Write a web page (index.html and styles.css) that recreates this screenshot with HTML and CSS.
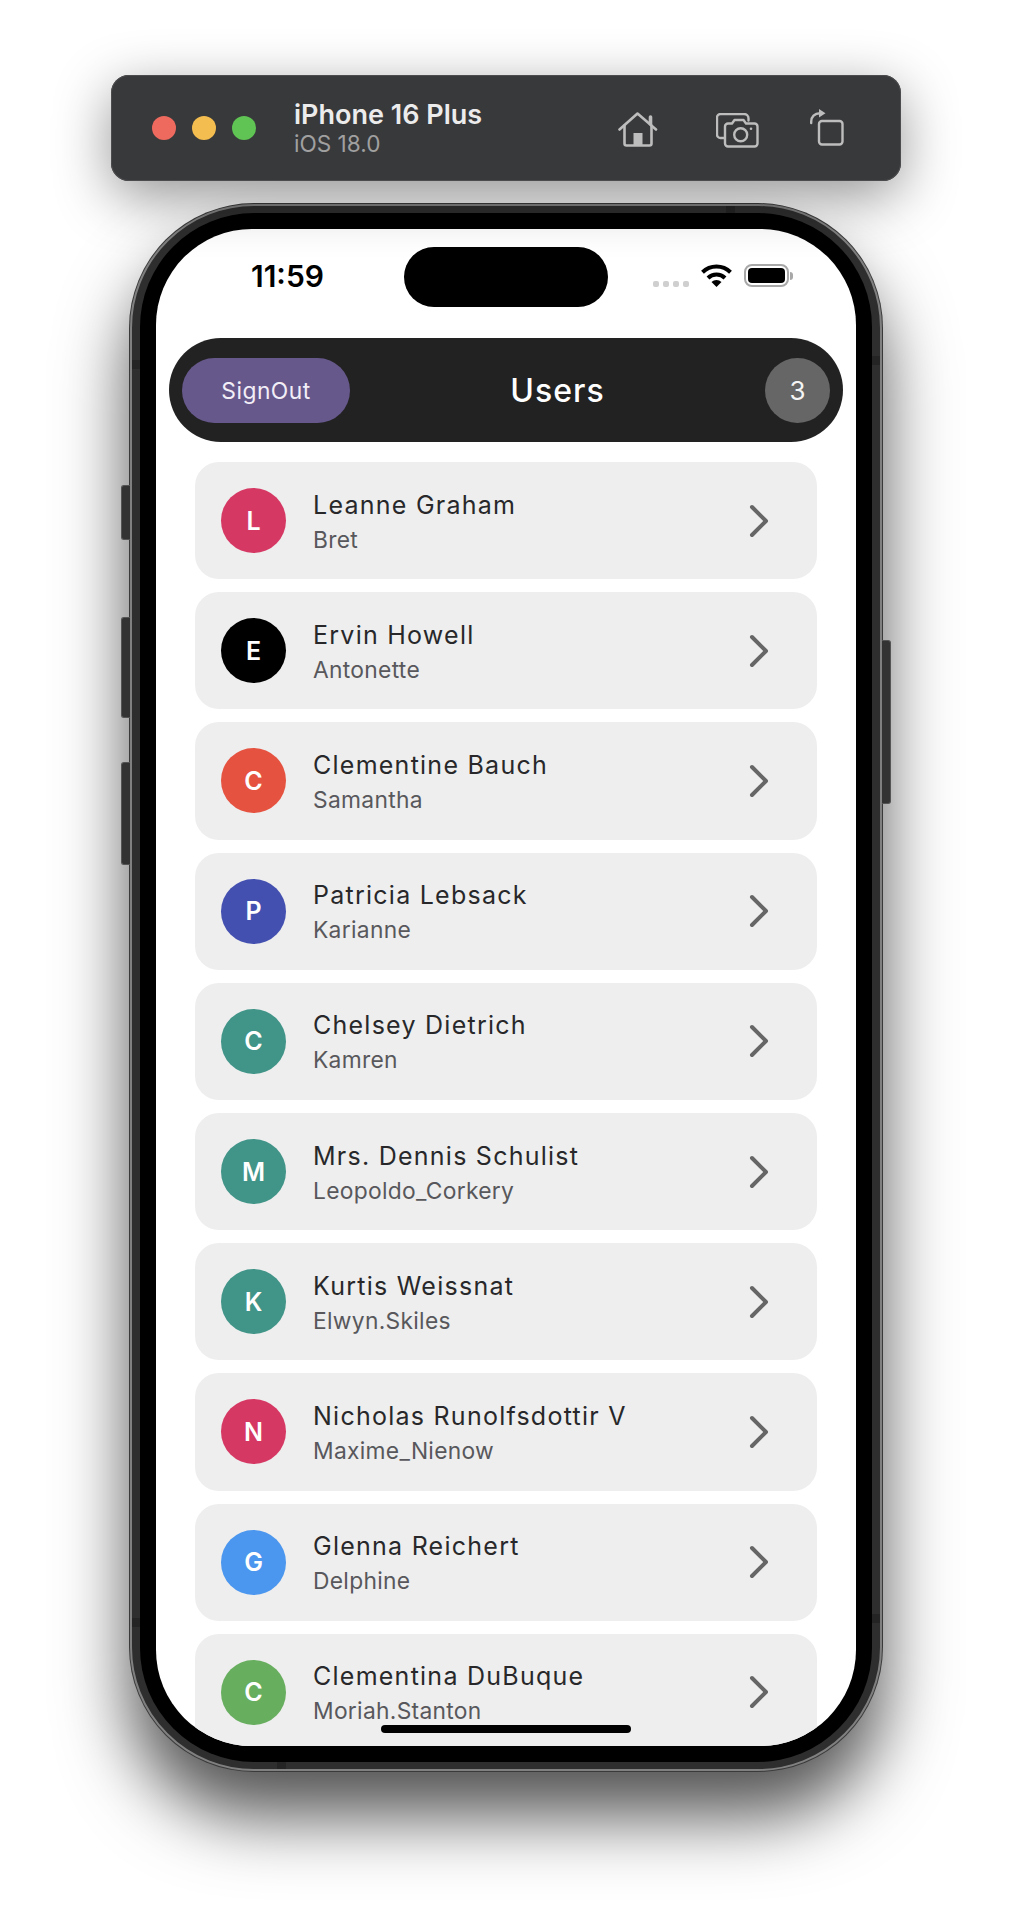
FILE: index.html
```html
<!DOCTYPE html>
<html lang="en">
<head>
<meta charset="utf-8">
<title>Users</title>
<link rel="stylesheet" href="styles.css">
</head>
<body>
<div class="stage">
  <header class="toolbar">
    <div class="traffic">
      <span class="light light-red"></span>
      <span class="light light-yellow"></span>
      <span class="light light-green"></span>
    </div>
    <div class="device">
      <div class="device-name">iPhone 16 Plus</div>
      <div class="device-os">iOS 18.0</div>
    </div>
    <div class="tools">
      <svg class="tool tool-home" viewBox="0 0 40 36" fill="none" stroke="#bdbdbd" stroke-width="2.6" stroke-linecap="round" stroke-linejoin="round">
        <path d="M1.5 17.5 19.5 1.5 38 17.5"/>
        <path d="M6.5 13.5V31.5a2 2 0 0 0 2 2H31.5a2 2 0 0 0 2-2V13.5"/>
        <path d="M32.5 5v7" stroke-width="3.6"/>
        <rect x="15.5" y="21" width="9" height="13" fill="#bdbdbd" stroke="none"/>
      </svg>
      <svg class="tool tool-camera" viewBox="0 0 43 35" fill="none" stroke="#bdbdbd" stroke-width="2.4" stroke-linecap="round" stroke-linejoin="round">
        <path d="M7.5 25H4.5a3.5 3.5 0 0 1-3.5-3.5V4.5A3.5 3.5 0 0 1 4.500 1H28a4.500 4.500 0 0 1 4.500 4.500V7.500"/>
        <path d="M12 10.500H16L18.500 7H27.500L30 10.500H38.500a3 3 0 0 1 3 3V30.500a3 3 0 0 1-3 3H12a3 3 0 0 1-3-3V13.500a3 3 0 0 1 3-3Z"/>
        <circle cx="24.700" cy="21.700" r="6.500"/>
        <circle cx="35" cy="15.700" r="1.300" fill="#bdbdbd" stroke="none"/>
      </svg>
      <svg class="tool tool-rotate" viewBox="0 0 34 39" fill="none" stroke="#bdbdbd" stroke-width="2.400" stroke-linecap="round" stroke-linejoin="round">
        <rect x="9" y="12" width="23.500" height="23.500" rx="3"/>
        <path d="M1.200 14V12.500C1.200 8 4.500 4.200 10 4.200"/>
        <path d="M9 0 15.500 4.200 9 8.500Z" fill="#bdbdbd" stroke="none"/>
      </svg>
    </div>
  </header>

  <div class="phone">
    <span class="key key-mute"></span>
    <span class="key key-up"></span>
    <span class="key key-down"></span>
    <span class="key key-power"></span>
    <span class="band band-top"></span>
    <span class="band band-bottom"></span>
    <span class="band band-lt"></span>
    <span class="band band-lb"></span>
    <span class="band band-rt"></span>
    <span class="band band-rb"></span>
    <div class="bezel">
      <main class="screen">
        <div class="status">
          <div class="time">11:59</div>
          <div class="island"></div>
          <div class="indicators">
            <div class="signal"><i></i><i></i><i></i><i></i></div>
            <svg class="wifi" viewBox="0 0 31 23" fill="none" stroke="#000">
              <path d="M1.500 8.300a20 20 0 0 1 28 0" stroke-width="4"/>
              <path d="M7 14a12 12 0 0 1 17 0" stroke-width="4"/>
              <path d="M15.500 23 10.500 18a7.200 7.200 0 0 1 10 0Z" fill="#000" stroke="none"/>
            </svg>
            <div class="battery"><div class="battery-body"><div class="battery-fill"></div></div><div class="battery-nub"></div></div>
          </div>
        </div>

        <div class="appbar">
          <button class="signout">SignOut</button>
          <h1 class="title">Users</h1>
          <div class="count">3</div>
        </div>

        <div class="list">
          <div class="card">
            <div class="avatar av-pink">L</div>
            <div class="info"><div class="name">Leanne Graham</div><div class="handle">Bret</div></div>
            <svg class="chev" viewBox="0 0 20 34" fill="none" stroke="#666" stroke-width="4" stroke-linecap="round" stroke-linejoin="round"><path d="M3 3 17 17 3 31"/></svg>
          </div>
          <div class="card">
            <div class="avatar av-black">E</div>
            <div class="info"><div class="name">Ervin Howell</div><div class="handle">Antonette</div></div>
            <svg class="chev" viewBox="0 0 20 34" fill="none" stroke="#666" stroke-width="4" stroke-linecap="round" stroke-linejoin="round"><path d="M3 3 17 17 3 31"/></svg>
          </div>
          <div class="card">
            <div class="avatar av-red">C</div>
            <div class="info"><div class="name">Clementine Bauch</div><div class="handle">Samantha</div></div>
            <svg class="chev" viewBox="0 0 20 34" fill="none" stroke="#666" stroke-width="4" stroke-linecap="round" stroke-linejoin="round"><path d="M3 3 17 17 3 31"/></svg>
          </div>
          <div class="card">
            <div class="avatar av-indigo">P</div>
            <div class="info"><div class="name">Patricia Lebsack</div><div class="handle">Karianne</div></div>
            <svg class="chev" viewBox="0 0 20 34" fill="none" stroke="#666" stroke-width="4" stroke-linecap="round" stroke-linejoin="round"><path d="M3 3 17 17 3 31"/></svg>
          </div>
          <div class="card">
            <div class="avatar av-teal">C</div>
            <div class="info"><div class="name">Chelsey Dietrich</div><div class="handle">Kamren</div></div>
            <svg class="chev" viewBox="0 0 20 34" fill="none" stroke="#666" stroke-width="4" stroke-linecap="round" stroke-linejoin="round"><path d="M3 3 17 17 3 31"/></svg>
          </div>
          <div class="card">
            <div class="avatar av-teal">M</div>
            <div class="info"><div class="name">Mrs. Dennis Schulist</div><div class="handle">Leopoldo_Corkery</div></div>
            <svg class="chev" viewBox="0 0 20 34" fill="none" stroke="#666" stroke-width="4" stroke-linecap="round" stroke-linejoin="round"><path d="M3 3 17 17 3 31"/></svg>
          </div>
          <div class="card">
            <div class="avatar av-teal">K</div>
            <div class="info"><div class="name">Kurtis Weissnat</div><div class="handle">Elwyn.Skiles</div></div>
            <svg class="chev" viewBox="0 0 20 34" fill="none" stroke="#666" stroke-width="4" stroke-linecap="round" stroke-linejoin="round"><path d="M3 3 17 17 3 31"/></svg>
          </div>
          <div class="card">
            <div class="avatar av-pink">N</div>
            <div class="info"><div class="name">Nicholas Runolfsdottir V</div><div class="handle">Maxime_Nienow</div></div>
            <svg class="chev" viewBox="0 0 20 34" fill="none" stroke="#666" stroke-width="4" stroke-linecap="round" stroke-linejoin="round"><path d="M3 3 17 17 3 31"/></svg>
          </div>
          <div class="card">
            <div class="avatar av-blue">G</div>
            <div class="info"><div class="name">Glenna Reichert</div><div class="handle">Delphine</div></div>
            <svg class="chev" viewBox="0 0 20 34" fill="none" stroke="#666" stroke-width="4" stroke-linecap="round" stroke-linejoin="round"><path d="M3 3 17 17 3 31"/></svg>
          </div>
          <div class="card">
            <div class="avatar av-green">C</div>
            <div class="info"><div class="name">Clementina DuBuque</div><div class="handle">Moriah.Stanton</div></div>
            <svg class="chev" viewBox="0 0 20 34" fill="none" stroke="#666" stroke-width="4" stroke-linecap="round" stroke-linejoin="round"><path d="M3 3 17 17 3 31"/></svg>
          </div>
        </div>
        <div class="home-bar"></div>
      </main>
    </div>
  </div>
</div>
</body>
</html>
```

FILE: styles.css
```css
* { box-sizing: border-box; }

html, body {
  margin: 0;
  background: #fff;
}

body {
  font-family: Inter, "Liberation Sans", sans-serif;
  overflow: hidden;
}

.stage {
  width: 1012px;
  height: 1924px;
  padding-top: 75px;
}

/* Simulator toolbar */
.toolbar {
  position: relative;
  z-index: 2;
  display: flex;
  align-items: center;
  width: 790px;
  height: 106px;
  margin-left: 111px;
  padding-left: 41px;
  background: #38393b;
  border-radius: 18px;
  box-shadow: inset 0 0 0 1px #4c4c4e, 0 15px 55px rgba(0, 0, 0, 0.42);
}

.traffic {
  display: flex;
  gap: 16px;
}

.light {
  width: 24px;
  height: 24px;
  border-radius: 50%;
}

.light-red { background: #ee6a5f; }
.light-yellow { background: #f4bd4f; }
.light-green { background: #5fc454; }

.device {
  width: 187px;
  margin-left: 38px;
}

.device-name {
  font-size: 27px;
  font-weight: 600;
  line-height: 30px;
  white-space: nowrap;
  color: #ececec;
}

.device-os {
  font-size: 22.6px;
  line-height: 27px;
  color: #a0a0a0;
}

.tools {
  display: flex;
  align-items: flex-end;
  margin-left: 137px;
}

.tool { display: block; }
.tool-home { width: 40px; height: 36px; }
.tool-camera { width: 43px; height: 35px; margin-left: 58px; }
.tool-rotate { width: 34px; height: 39px; margin-left: 51px; }

/* Phone frame */
.phone {
  position: relative;
  display: flex;
  width: 752px;
  height: 1567px;
  margin: 23px 0 0 130px;
  padding: 7px 8px;
  background: #2e2e2e;
  border: 2px solid #808080;
  border-radius: 124px;
  box-shadow: 0 0 0 1px #3a3a3a, 0 45px 70px rgba(0, 0, 0, 0.68);
}

.key {
  position: absolute;
  width: 9px;
  background: #333;
  border: 1px solid #555;
}

.key-mute, .key-up, .key-down {
  left: -11px;
  border-right: 0;
  border-radius: 3px 0 0 3px;
}

.key-mute { top: 279px; height: 55px; }
.key-up { top: 411px; height: 101px; }
.key-down { top: 556px; height: 103px; }

.key-power {
  right: -11px;
  top: 434px;
  height: 164px;
  border-left: 0;
  border-radius: 0 3px 3px 0;
}

.band {
  position: absolute;
  background: #242424;
}

.band-top { top: 0; left: 594px; width: 9px; height: 7px; }
.band-bottom { bottom: 0; left: 145px; width: 9px; height: 7px; }
.band-lt { left: 0; top: 154px; width: 8px; height: 9px; }
.band-lb { left: 0; top: 1412px; width: 8px; height: 9px; }
.band-rt { right: 0; top: 150px; width: 8px; height: 9px; }
.band-rb { right: 0; top: 1408px; width: 8px; height: 9px; }

.bezel {
  flex: 1;
  display: flex;
  padding: 16px;
  background: #000;
  border-radius: 114px;
}

.screen {
  position: relative;
  flex: 1;
  display: flex;
  flex-direction: column;
  overflow: hidden;
  background: #fff;
  border-radius: 96px;
}

/* Status bar */
.status {
  flex: none;
  display: grid;
  grid-template-columns: 248px 204px 1fr;
  height: 109px;
  padding-top: 18px;
}

.time {
  padding: 12px 0 0 95px;
  font-size: 30px;
  font-weight: 600;
  line-height: 35px;
  color: #000;
}

.island {
  height: 60px;
  background: #000;
  border-radius: 30px;
}

.indicators {
  display: flex;
  align-items: flex-start;
  gap: 12px;
  padding: 17px 0 0 45px;
}

.signal {
  display: flex;
  gap: 4px;
  margin-top: 17px;
}

.signal i {
  width: 6px;
  height: 6px;
  background: #cfcfcf;
  border-radius: 2px;
}

.wifi {
  width: 31px;
  height: 23px;
}

.battery {
  display: flex;
  align-items: center;
  gap: 1px;
}

.battery-body {
  width: 45px;
  height: 23px;
  padding: 2px;
  border: 2px solid #a8a8a8;
  border-radius: 8px;
}

.battery-fill {
  height: 100%;
  background: #000;
  border-radius: 4px;
}

.battery-nub {
  width: 3px;
  height: 8px;
  background: #a8a8a8;
  border-radius: 0 3px 3px 0;
}

/* App bar */
.appbar {
  flex: none;
  display: flex;
  align-items: center;
  justify-content: space-between;
  height: 104px;
  margin: 0 13px;
  padding: 0 13px;
  background: #222;
  border-radius: 52px;
}

.signout {
  width: 168px;
  height: 65px;
  padding: 0;
  font-family: inherit;
  font-size: 22.8px;
  letter-spacing: 0.5px;
  color: #f2eef7;
  background: #67588c;
  border: 0;
  border-radius: 33px;
}

.title {
  margin: 0;
  font-size: 32px;
  font-weight: 500;
  letter-spacing: 1px;
  color: #fff;
}

.count {
  display: flex;
  align-items: center;
  justify-content: center;
  width: 65px;
  height: 65px;
  font-size: 26px;
  color: #f4f4f4;
  background: #666;
  border-radius: 50%;
}

/* List */
.list {
  flex: 1;
  min-height: 0;
  display: flex;
  flex-direction: column;
  gap: 13px;
  padding: 20px 39px 0;
}

.card {
  flex: none;
  display: flex;
  align-items: center;
  height: 117.2px;
  padding: 0 48px 0 26px;
  background: #eee;
  border-radius: 24px;
}

.avatar {
  flex: none;
  display: flex;
  align-items: center;
  justify-content: center;
  width: 65px;
  height: 65px;
  font-size: 25px;
  font-weight: 600;
  color: #fff;
  border-radius: 50%;
}

.av-pink { background: #d63864; }
.av-black { background: #000; }
.av-red { background: #e55340; }
.av-indigo { background: #4350b0; }
.av-teal { background: #419488; }
.av-blue { background: #4b96ee; }
.av-green { background: #68ae5f; }

.info {
  flex: 1;
  margin-left: 27px;
  padding-top: 4px;
}

.name {
  font-size: 25px;
  line-height: 34px;
  letter-spacing: 1.25px;
  color: #28282a;
}

.handle {
  font-size: 22.8px;
  line-height: 36px;
  letter-spacing: 0.3px;
  color: #58585c;
}

.chev {
  flex: none;
  width: 20px;
  height: 34px;
}

.home-bar {
  position: absolute;
  left: 225px;
  bottom: 13px;
  width: 250px;
  height: 8px;
  background: #000;
  border-radius: 4px;
}
```
